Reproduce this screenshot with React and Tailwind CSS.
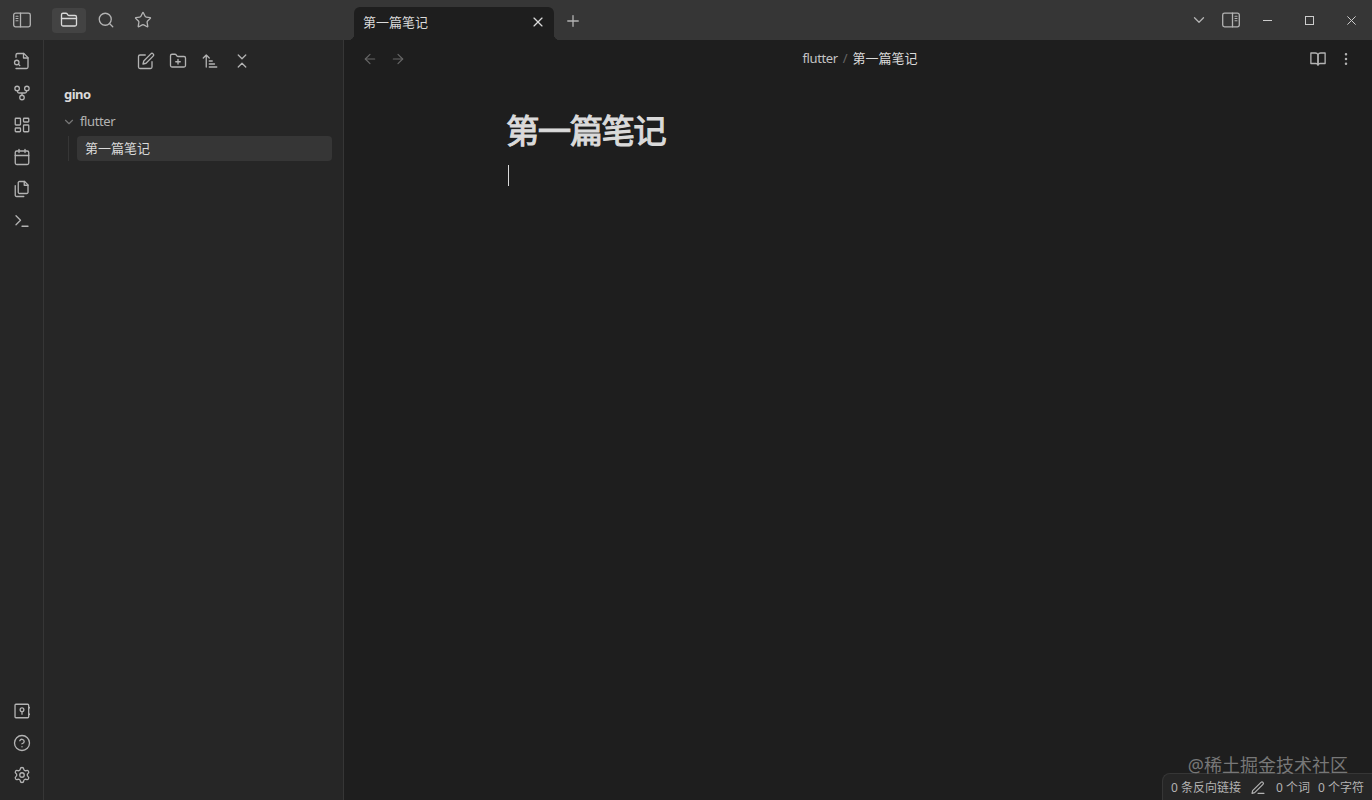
import {
  ArrowLeft,
  ArrowRight,
  Calendar,
  ChevronDown,
  ChevronsDownUp,
  CircleHelp,
  EllipsisVertical,
  FolderPlus,
  LayoutDashboard,
  Plus,
  Search,
  Settings,
  Star,
  X,
} from 'lucide-react';

const NOTE_TITLE = '第一篇笔记';

// Shared wrapper for the icons that lucide doesn't ship in this shape
function Icon({ size = 18, children, className = '' }) {
  return (
    <svg
      width={size}
      height={size}
      viewBox="0 0 24 24"
      fill="none"
      stroke="currentColor"
      strokeWidth="1.75"
      strokeLinecap="round"
      strokeLinejoin="round"
      className={className}
    >
      {children}
    </svg>
  );
}

function SidebarIcon({ flipped }) {
  return (
    <svg
      width="18"
      height="16"
      viewBox="0 0 18 16"
      fill="none"
      stroke="currentColor"
      strokeWidth="1.3"
      strokeLinecap="round"
      className={flipped ? '-scale-x-100' : ''}
    >
      <rect x="0.7" y="1.1" width="16.6" height="13.8" rx="1.8" />
      <path d="M7.5 1.2v13.6" />
      <path d="M3 4.2h2M3 6.5h2M3 8.8h2" strokeWidth="1.1" />
    </svg>
  );
}

function FileSearchIcon() {
  return (
    <Icon>
      <path d="M4 22h14a2 2 0 0 0 2-2V7.5L14.5 2H6a2 2 0 0 0-2 2v3" />
      <path d="M14 2v6h6" />
      <circle cx="5" cy="14" r="3" />
      <path d="m9 18-1.5-1.5" />
    </Icon>
  );
}

function GraphIcon() {
  return (
    <Icon>
      <circle cx="12" cy="18" r="3" />
      <circle cx="5.5" cy="6" r="3" />
      <circle cx="18.5" cy="6" r="3" />
      <path d="M18 9v1a2 2 0 0 1-2 2H8a2 2 0 0 1-2-2V9M12 12v3" />
    </Icon>
  );
}

function FilesIcon() {
  return (
    <Icon>
      <path d="M15.5 2H8.6c-.4 0-.8.2-1.1.5-.3.3-.5.7-.5 1.1v12.8c0 .4.2.8.5 1.1.3.3.7.5 1.1.5h9.8c.4 0 .8-.2 1.1-.5.3-.3.5-.7.5-1.1V6.5L15.5 2z" />
      <path d="M3 7.6v12.8c0 .4.2.8.5 1.1.3.3.7.5 1.1.5h9.8" />
      <path d="M15 2v5h5" />
    </Icon>
  );
}

function TerminalIcon() {
  return (
    <Icon>
      <path d="m4 17 6-6-6-6" />
      <path d="M12 19h8" />
    </Icon>
  );
}

function VaultIcon() {
  return (
    <Icon>
      <rect x="2.7" y="3" width="18.2" height="18" rx="1.2" />
      <circle cx="12" cy="10.3" r="2.5" />
      <path d="M12 12.8v3.4" />
      <path d="M22 7v1.2M22 15.8V17" strokeWidth="1.3" />
    </Icon>
  );
}

function FolderIcon() {
  return (
    <Icon>
      <path d="M4 20h16a2 2 0 0 0 2-2V8a2 2 0 0 0-2-2h-7.93a2 2 0 0 1-1.66-.9l-.82-1.2A2 2 0 0 0 7.93 3H4a2 2 0 0 0-2 2v13c0 1.1.9 2 2 2Z" />
      <path d="M2 10h20" />
    </Icon>
  );
}

function EditIcon() {
  return (
    <Icon>
      <path d="M11 4H4a2 2 0 0 0-2 2v14a2 2 0 0 0 2 2h14a2 2 0 0 0 2-2v-7" />
      <path d="M18.5 2.5a2.12 2.12 0 0 1 3 3L12 15l-4 1 1-4z" />
    </Icon>
  );
}

function SortIcon() {
  return (
    <Icon>
      <path d="m3 8 4-4 4 4M7 4v16" />
      <path d="M11 12h4M11 16h7M11 20h10" />
    </Icon>
  );
}

function BookIcon() {
  return (
    <Icon>
      <path d="M2.5 4H8a4 4 0 0 1 4 2.5V20a3 3 0 0 0-3-2H2.5z" />
      <path d="M21.5 4H16a4 4 0 0 0-4 2.5V20a3 3 0 0 1 3-2h6.5z" />
    </Icon>
  );
}

function PencilIcon() {
  return (
    <Icon size={16}>
      <path d="M12 20h9" />
      <path d="M16.5 3.5a2.12 2.12 0 0 1 3 3L7 19l-4 1 1-4z" />
    </Icon>
  );
}

function RibbonButton({ children }) {
  return <button className="flex h-8 w-8 items-center justify-center">{children}</button>;
}

function TitleBar() {
  return (
    <header className="flex h-10 shrink-0 bg-[#363636] text-[#b3b3b3]">
      <div className="flex w-[344px] shrink-0 items-center">
        <button className="flex w-11 justify-center"><SidebarIcon /></button>
        <div className="flex items-center gap-[3px] pl-2">
          <button className="flex h-[25px] w-[34px] items-center justify-center rounded bg-[#434343] text-[#dadada]">
            <FolderIcon />
          </button>
          <button className="flex w-[34px] justify-center"><Search size={18} strokeWidth={1.75} /></button>
          <button className="flex w-[34px] justify-center"><Star size={18} strokeWidth={1.75} /></button>
        </div>
      </div>

      <div className="flex flex-1 items-end">
        {/* Active tab, with the small outward curves at its feet */}
        <div className="relative ml-2.5 flex h-[33px] w-[200px] items-center justify-between rounded-t-[6px] bg-[#1e1e1e] pr-2 pb-[3px] pl-[9px] text-[#dadada]">
          <span className="absolute bottom-0 -left-1.5 h-1.5 w-1.5 bg-[radial-gradient(circle_at_0_0,transparent_6px,#1e1e1e_6.5px)]" />
          <span className="absolute -right-1.5 bottom-0 h-1.5 w-1.5 bg-[radial-gradient(circle_at_100%_0,transparent_6px,#1e1e1e_6.5px)]" />
          <span className="pt-0.5">{NOTE_TITLE}</span>
          <X size={16} strokeWidth={1.75} />
        </div>
        <button className="ml-2.5 flex h-[38px] items-center"><Plus size={18} strokeWidth={1.75} /></button>
      </div>

      <div className="flex items-center">
        <button className="flex w-8 justify-center"><ChevronDown size={18} strokeWidth={1.75} /></button>
        <button className="flex w-8 justify-center"><SidebarIcon flipped /></button>
        <div className="flex">
          <button className="flex h-10 w-[42px] items-center justify-center pr-px">
            <span className="h-px w-[9px] bg-[#cccccc]" />
          </button>
          <button className="flex h-10 w-[42px] items-center justify-center pr-px">
            <span className="h-[9px] w-[9px] border border-[#cccccc]" />
          </button>
          <button className="flex h-10 w-[41px] items-center justify-center text-[#cccccc]">
            <svg width="9" height="9" viewBox="0 0 9 9" stroke="currentColor" strokeWidth="1">
              <path d="m.4.4 8.2 8.2M8.6.4.4 8.6" />
            </svg>
          </button>
        </div>
      </div>
    </header>
  );
}

function Ribbon() {
  return (
    <nav className="flex w-11 shrink-0 flex-col items-center justify-between border-r border-[#363636] bg-[#262626] pt-[5px] pb-[9px] text-[#b3b3b3]">
      <div>
        <RibbonButton><FileSearchIcon /></RibbonButton>
        <RibbonButton><GraphIcon /></RibbonButton>
        <RibbonButton><LayoutDashboard size={18} strokeWidth={1.75} /></RibbonButton>
        <RibbonButton><Calendar size={18} strokeWidth={1.75} /></RibbonButton>
        <RibbonButton><FilesIcon /></RibbonButton>
        <RibbonButton><TerminalIcon /></RibbonButton>
      </div>
      <div>
        <RibbonButton><VaultIcon /></RibbonButton>
        <RibbonButton><CircleHelp size={18} strokeWidth={1.75} /></RibbonButton>
        <RibbonButton><Settings size={18} strokeWidth={1.75} /></RibbonButton>
      </div>
    </nav>
  );
}

function FileExplorer() {
  return (
    <aside className="w-[300px] shrink-0 border-r border-[#363636] bg-[#262626]">
      <div className="flex h-[42px] items-center justify-center gap-3.5 pl-[1px] text-[#b3b3b3]">
        <EditIcon />
        <FolderPlus size={18} strokeWidth={1.75} />
        <SortIcon />
        <ChevronsDownUp size={18} strokeWidth={1.75} />
      </div>
      <div className="pr-[11px] pl-5">
        <div className="flex h-[25px] items-center font-bold tracking-[-0.5px] text-[#dadada]">gino</div>
        <div className="mt-0.5 flex h-[25px] items-center text-[#b3b3b3]">
          <ChevronDown size={14} strokeWidth={2} className="-ml-0.5 text-[#777777]" />
          <span className="ml-1 tracking-[-0.4px]">flutter</span>
        </div>
        <div className="mt-0.5 ml-1 border-l border-[#363636] pl-2">
          <div className="flex h-[25px] items-center rounded bg-[#363636] pl-2 text-[#dadada]">{NOTE_TITLE}</div>
        </div>
      </div>
    </aside>
  );
}

function StatusBar() {
  return (
    <footer className="absolute right-0 bottom-0 flex h-[27px] items-center rounded-tl-lg border-t border-l border-[#363636] bg-[#262626] pt-px pr-2 pl-2 text-[12px] text-[#b3b3b3]">
      <span>0 条反向链接</span>
      <span className="mr-2.5 ml-[9px]"><PencilIcon /></span>
      <span>0 个词</span>
      <span className="ml-2">0 个字符</span>
    </footer>
  );
}

function Editor() {
  return (
    <main className="flex flex-1 flex-col bg-[#1e1e1e]">
      <div className="flex h-[38px] items-center pr-[18px] pl-[18px] text-[#b3b3b3]">
        <div className="flex flex-1 gap-3 text-[#666666]">
          <ArrowLeft size={16} strokeWidth={1.75} />
          <ArrowRight size={16} strokeWidth={1.75} />
        </div>
        <div className="flex pl-1">
          <span className="tracking-[-0.4px] text-[#c4c4c4]">flutter</span>
          <span className="mx-[5px] text-[#666666]">/</span>
          <span className="text-[#dadada]">{NOTE_TITLE}</span>
        </div>
        <div className="flex flex-1 items-center justify-end gap-[11px]">
          <BookIcon />
          <EllipsisVertical size={16} strokeWidth={1.75} />
        </div>
      </div>
      <div className="w-[700px] self-center pt-7">
        <h1 className="-ml-0.5 text-[33.5px] leading-12 font-normal tracking-[-0.05em] text-[#dadada] [-webkit-text-stroke:1px_#dadada]">
          {NOTE_TITLE}
        </h1>
        <div className="mt-[11px] h-[21px] w-px bg-[#dadada]" />
      </div>
    </main>
  );
}

export default function App() {
  return (
    <div className="relative flex h-screen flex-col overflow-hidden bg-[#1e1e1e] font-['Noto_Sans','Noto_Sans_CJK_SC',sans-serif] text-[13px]">
      <TitleBar />
      <div className="flex min-h-0 flex-1">
        <Ribbon />
        <FileExplorer />
        <Editor />
      </div>
      <StatusBar />
      <div className="absolute right-6 bottom-[21px] text-[18px] leading-7 text-[#777777]">@稀土掘金技术社区</div>
    </div>
  );
}
